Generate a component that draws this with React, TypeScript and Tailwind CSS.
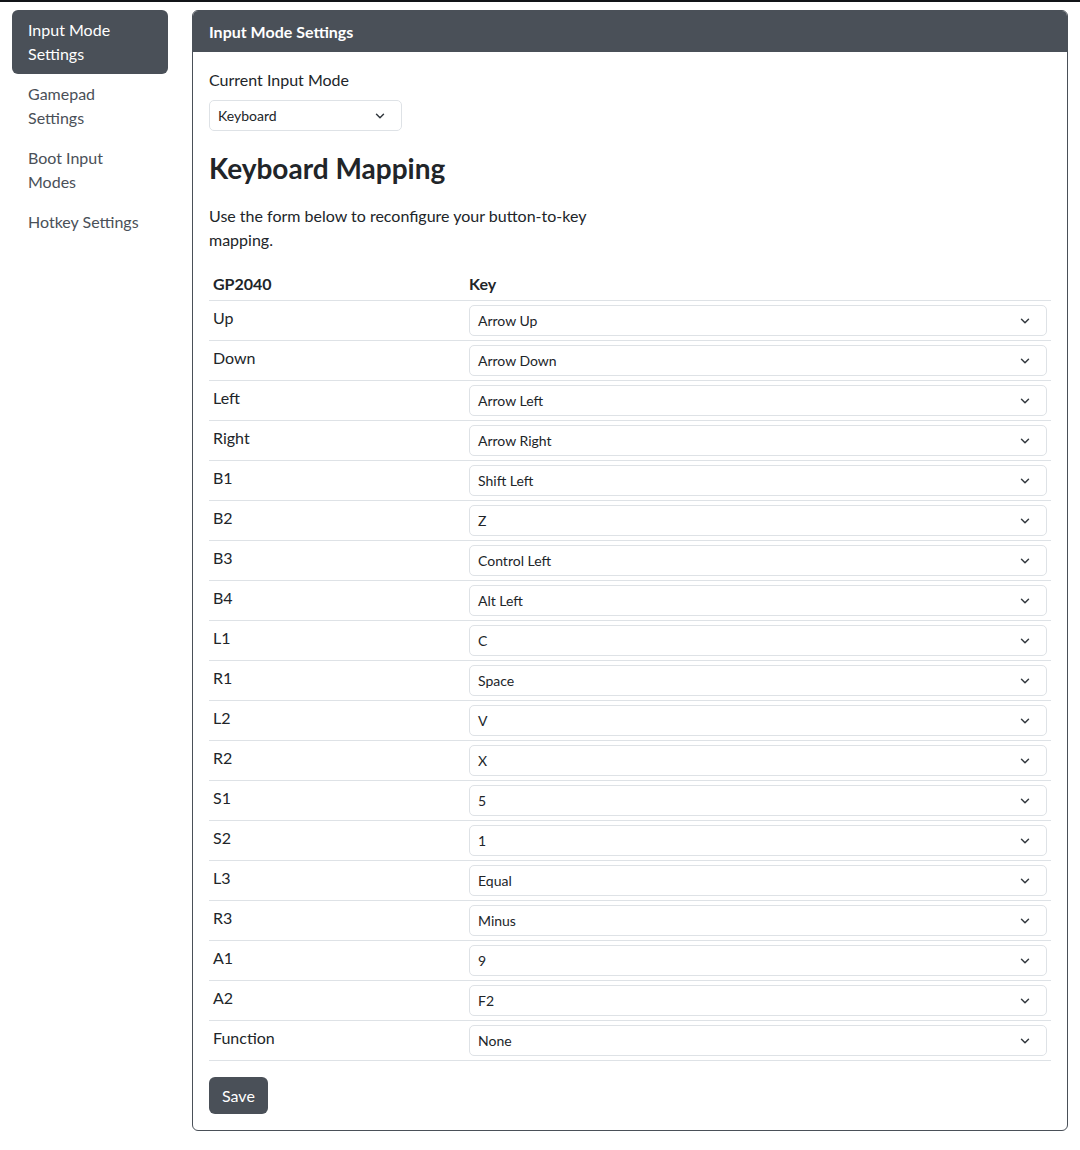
import React from 'react';
import { ChevronDown } from 'lucide-react';

const navItems = ['Input Mode Settings', 'Gamepad Settings', 'Boot Input Modes', 'Hotkey Settings'];

const mappings: [string, string][] = [
  ['Up', 'Arrow Up'],
  ['Down', 'Arrow Down'],
  ['Left', 'Arrow Left'],
  ['Right', 'Arrow Right'],
  ['B1', 'Shift Left'],
  ['B2', 'Z'],
  ['B3', 'Control Left'],
  ['B4', 'Alt Left'],
  ['L1', 'C'],
  ['R1', 'Space'],
  ['L2', 'V'],
  ['R2', 'X'],
  ['S1', '5'],
  ['S2', '1'],
  ['L3', 'Equal'],
  ['R3', 'Minus'],
  ['A1', '9'],
  ['A2', 'F2'],
  ['Function', 'None'],
];

function Select({ value, className }: { value: string; className?: string }) {
  return (
    <div
      className={`flex items-center justify-between h-[31px] pl-2 pr-[14px] border border-[#dee2e6] rounded-[5px] bg-white text-[14px] text-[#212529] ${className ?? ''}`}
    >
      <span>{value}</span>
      <ChevronDown className="w-[14px] h-[14px] text-[#343a40]" strokeWidth={2.5} />
    </div>
  );
}

export default function App() {
  return (
    <div className="min-h-[1150px] bg-white text-[#212529] font-['Lato','Noto_Sans',sans-serif] text-[16px] leading-6">
      <div className="h-[2px] bg-[#111418]" />
      <div className="flex gap-6 px-3 pt-2">
        <nav className="w-[156px] shrink-0 flex flex-col">
          {navItems.map((item, i) => (
            <div
              key={item}
              className={`px-4 py-2 rounded-[6px] ${i === 0 ? 'bg-[#4a5058] text-white' : 'text-[#4a5058]'}`}
            >
              {item}
            </div>
          ))}
        </nav>

        <div className="w-[876px] border border-[#4a5058] rounded-[6px] overflow-hidden">
          <div className="h-[41px] bg-[#4a5058] text-white font-bold px-4 flex items-center">Input Mode Settings</div>
          <div className="p-4">
            <div className="mb-2">Current Input Mode</div>
            <Select value="Keyboard" className="w-[193px]" />
            <h3 className="text-[28px] font-bold leading-[34px] mt-5 mb-[19px]">Keyboard Mapping</h3>
            <p className="w-[421px] mb-4">Use the form below to reconfigure your button-to-key mapping.</p>
            <table className="w-full border-collapse">
              <thead>
                <tr className="border-b border-[#dee2e6]">
                  <th className="w-[256px] text-left font-bold px-1 py-1">GP2040</th>
                  <th className="text-left font-bold px-1 py-1">Key</th>
                </tr>
              </thead>
              <tbody>
                {mappings.map(([button, key]) => (
                  <tr key={button} className="border-b border-[#dee2e6] h-10">
                    <td className="px-1 pt-[5px] pb-1 align-top">{button}</td>
                    <td className="px-1 py-1 align-top">
                      <Select value={key} className="h-[30px]" />
                    </td>
                  </tr>
                ))}
              </tbody>
            </table>
            <button className="mt-4 h-[37px] px-[13px] rounded-[6px] bg-[#4a5058] text-white">Save</button>
          </div>
        </div>
      </div>
    </div>
  );
}
